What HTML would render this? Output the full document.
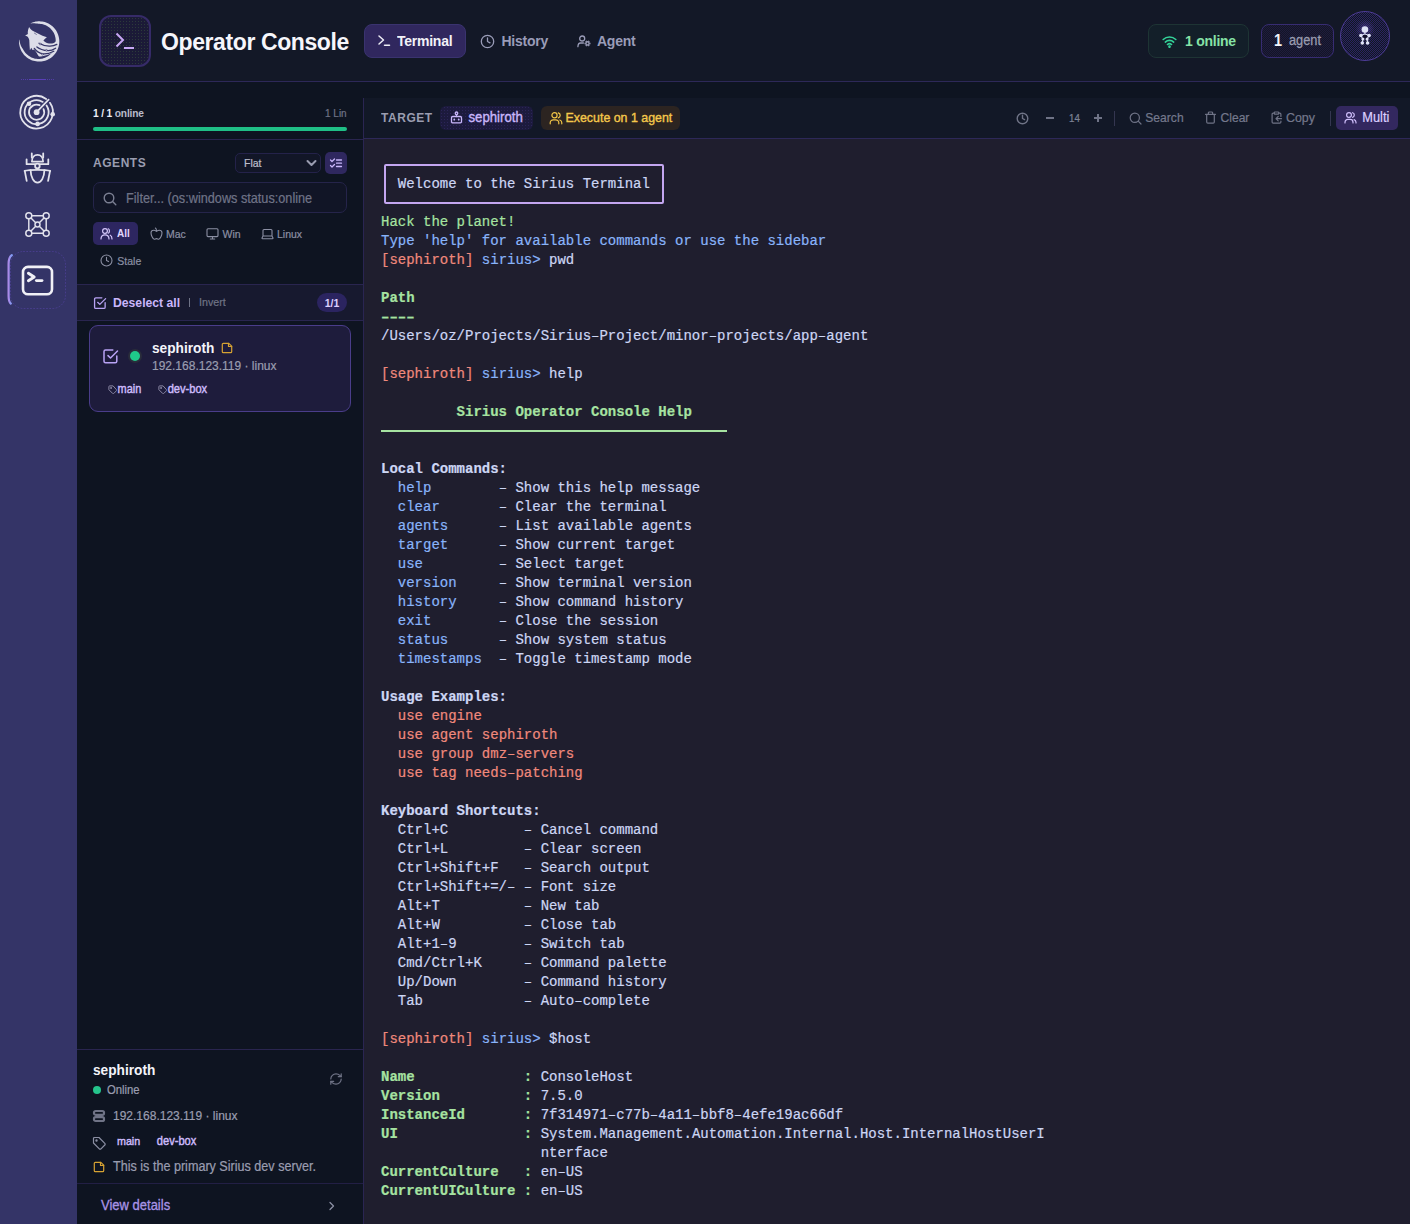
<!DOCTYPE html>
<html><head><meta charset="utf-8">
<style>
*{box-sizing:border-box;margin:0;padding:0}
html,body{width:1410px;height:1224px;overflow:hidden;background:#0e1421;font-family:"Liberation Sans",sans-serif}
.a{position:absolute}
.t{position:absolute;white-space:nowrap;line-height:1;transform:scaleY(1.1);transform-origin:0 85%}
svg{position:absolute;display:block;fill:none;stroke:currentColor;stroke-linecap:round;stroke-linejoin:round}
#rail{left:0;top:0;width:77px;height:1224px;background:#343467}
#hdr{left:77px;top:0;width:1333px;height:81px;background:#131827}
.hline{height:1px;background:#2d2858}
#term{left:364px;top:139px;width:1046px;height:1085px;background:#1f1e2e}
pre{-webkit-text-stroke:0.2px currentColor;position:absolute;left:381px;top:156px;font-family:"Liberation Mono",monospace;font-size:14px;line-height:19px;color:#cdd6f4;white-space:pre}
.g{color:#a6e3a1}.gb{color:#a6e3a1;font-weight:bold}.b{color:#89b4fa}.r{color:#f0897c}.w{color:#cdd6f4}.wb{color:#cdd6f4;font-weight:bold}
</style></head><body>
<!-- RAIL -->
<div id="rail" class="a"></div>
<!-- HEADER -->
<div id="hdr" class="a"></div>
<div class="a hline" style="left:77px;top:81px;width:1333px"></div>
<!-- RAIL ICONS -->
<svg class="a" style="left:17px;top:19px;width:45px;height:45px;fill:#dcdde8;stroke:none" viewBox="0 0 45 45">
<path d="M13.63 4.19 L14.85 3.67 L16.09 3.23 L17.36 2.88 L18.65 2.61 L19.96 2.42 L21.27 2.32 L22.59 2.30 L23.91 2.38 L25.22 2.53 L26.51 2.78 L27.79 3.10 L29.04 3.52 L30.27 4.01 L31.45 4.58 L32.60 5.22 L33.71 5.94 L34.76 6.74 L35.76 7.59 L36.71 8.52 L37.59 9.50 L38.40 10.54 L39.14 11.62 L39.82 12.76 L40.41 13.93 L40.93 15.15 L41.37 16.39 L41.72 17.66 L41.99 18.95 L42.18 20.26 L42.28 21.57 L42.30 22.89 L42.22 24.21 L42.07 25.52 L41.82 26.81 L41.50 28.09 L41.08 29.34 L40.59 30.57 L40.02 31.75 L39.38 32.90 L38.66 34.01 L37.86 35.06 L37.01 36.06 L36.08 37.01 L35.10 37.89 L34.06 38.70 L32.98 39.44 L31.84 40.12 L30.67 40.71 L29.45 41.23 L28.21 41.67 L26.94 42.02 L25.65 42.29 L24.34 42.48 L23.03 42.58 L21.71 42.60 L20.39 42.52 L19.08 42.37 L17.79 42.12 L16.51 41.80 L15.26 41.38 L14.03 40.89 L12.85 40.32 L11.70 39.68 L10.59 38.96 L9.54 38.16 L8.54 37.31 L7.59 36.38 L6.71 35.40 L5.90 34.36 L5.16 33.28 L4.48 32.14 L3.89 30.97 L3.37 29.75 L2.93 28.51 L2.58 27.24 L2.31 25.95 L2.12 24.64 L2.02 23.33 L2.00 22.01 L2.08 20.69 L2.38 20.72 L2.54 22.02 L2.79 23.30 L3.13 24.53 L3.54 25.73 L4.02 26.89 L4.58 27.99 L5.20 29.04 L5.88 30.04 L6.43 31.07 L7.05 32.07 L7.73 33.02 L8.47 33.93 L9.27 34.78 L10.12 35.58 L11.01 36.32 L11.96 37.00 L12.94 37.62 L13.97 38.17 L15.02 38.65 L16.10 39.06 L17.21 39.40 L18.33 39.66 L19.47 39.85 L20.62 39.97 L21.77 40.01 L22.91 39.97 L24.05 39.84 L25.18 39.63 L26.29 39.36 L27.37 39.01 L28.43 38.60 L29.45 38.11 L30.44 37.57 L31.39 36.96 L32.30 36.29 L33.15 35.56 L33.96 34.78 L34.71 33.96 L35.40 33.09 L36.03 32.17 L36.61 31.22 L37.11 30.24 L37.55 29.23 L37.92 28.19 L38.22 27.13 L38.45 26.06 L38.61 24.98 L38.70 23.90 L38.72 22.81 L38.70 21.73 L38.67 20.64 L38.56 19.56 L38.38 18.48 L38.13 17.41 L37.81 16.36 L37.42 15.33 L36.96 14.32 L36.44 13.35 L35.85 12.41 L35.20 11.50 L34.49 10.64 L33.72 9.82 L32.90 9.06 L32.03 8.35 L31.11 7.69 L30.14 7.10 L29.14 6.56 L28.10 6.10 L27.03 5.70 L25.94 5.37 L24.82 5.11 L23.68 4.93 L22.53 4.82 L21.37 4.68 L20.19 4.55 L18.96 4.38 L17.70 4.26 L16.41 4.23 L15.09 4.30 L13.76 4.46Z"/>
<path d="M12.1 7.9 C13.3 9.6 14.2 10.8 15.6 11.8 C17.5 12.9 19.5 13.6 21.5 14.8 C24 16.2 26.8 17.3 29.9 18.3 C28.6 19.3 27.4 20.2 26.4 21.4 C29 24.2 33 25 36.2 24.3 C37.8 23.8 39 22.6 39.8 20.8 C40.6 25.5 39.5 29.5 37 32.2 C33.5 35.6 27.5 37 22 37.6 C20.6 35.5 19.6 33.8 18.8 32.4 L17.2 30.4 L15.5 31 L14.3 28.8 L12.9 31.2 C12.6 28 12.4 24.5 12.3 21.2 C11.9 19.6 11.2 18.3 10.4 17.6 L8.1 16.4 C9.2 16 10.1 15.6 10.9 15 C10.5 13.5 11 11.3 11.3 10.2 Z"/>
<g fill="none" stroke="#343467" stroke-linecap="round">
<path d="M22 24.3 C25 26 29 27.4 33 27.2 C35.5 27 37.8 26.4 39.8 25.4" stroke-width="1.3"/>
<path d="M19.9 27.9 C22.5 30 26 31.2 31.2 31.6 C34 31.6 36.5 30.6 38.6 29.2" stroke-width="1.3"/>
<path d="M17.3 29.4 C19 32 22 34.1 26 34.8 C30 35.2 33.5 34 36.8 32.2" stroke-width="1.3"/>
<path d="M17.4 14.1 L19.4 15.4" stroke-width="0.6"/>
</g>
<g fill="#dcdde8" stroke="#343467" stroke-width="0.5">
<circle cx="23.2" cy="25" r="0.9"/><circle cx="29.4" cy="31.3" r="0.9"/><circle cx="25.4" cy="35.3" r="0.9"/>
</g>
</svg>
<div class="a" style="left:21px;top:79px;width:34px;height:1px;background-image:linear-gradient(90deg,#5a3fb8 50%,transparent 50%);background-size:2px 1px;opacity:.8"></div>
<div class="a" style="left:29px;top:79px;width:17px;height:1px;background:#5a3fb8"></div>
<!-- radar -->
<svg class="a" style="left:16px;top:92px;width:42px;height:42px;color:#e2e2ec;stroke-width:1.8" viewBox="0 0 42 42">
<path d="M33.95 10.85 A16.3 16.3 0 1 1 30.18 7.01"/><path d="M30.55 13.49 A12 12 0 1 1 26.78 9.91"/><path d="M27.54 17.11 A7.6 7.6 0 1 1 23.57 13.20"/>
<circle cx="20.6" cy="20.2" r="2.9" fill="#e2e2ec" stroke="none"/><path d="M20.6 20.2 L32.6 7.6"/>
<circle cx="13" cy="11.7" r="2.3" fill="#e2e2ec" stroke="none"/><circle cx="36.7" cy="22.3" r="2.3" fill="#e2e2ec" stroke="none"/><circle cx="21.6" cy="31.9" r="2.3" fill="#e2e2ec" stroke="none"/>
</svg>
<!-- bug -->
<svg class="a" style="left:18px;top:148px;width:40px;height:40px;color:#e2e2ec;stroke-width:1.8" viewBox="0 0 40 40">
<path d="M13.8 5.3 V9.5 M25.2 5.3 V9.5"/>
<path d="M13.9 13.6 C13.9 9.3 16.4 6.9 19.5 6.9 C22.6 6.9 25.1 9.3 25.1 13.6 Z"/>
<circle cx="19.4" cy="18" r="2.3"/>
<path d="M17 16.2 L8.6 16.2 L8.6 11.3 M21.8 16.2 L30.3 16.2 L30.3 11.3"/>
<path d="M6.6 22.9 C9.5 22 13 21.8 19.5 21.8 C26 21.8 29.5 22 32.2 22.9"/>
<path d="M12.6 22.2 C12.8 29.5 15.8 34.6 19.5 34.6 C23.2 34.6 26.2 29.5 26.4 22.2"/>
<path d="M6.8 23.2 L8.7 32.8 M32 23.2 L30.1 32.8"/>
</svg>
<!-- network -->
<svg class="a" style="left:24px;top:211px;width:27px;height:27px;color:#e2e2ec;stroke-width:1.45" viewBox="0 0 27 27">
<circle cx="4.8" cy="4.8" r="3"/><circle cx="22.2" cy="4.8" r="3"/><circle cx="4.8" cy="22.2" r="3"/><circle cx="22.2" cy="22.2" r="3"/><circle cx="13.5" cy="13.5" r="2.5"/>
<path d="M7.8 4.8 H19.2 M7.8 22.2 H19.2 M4.8 7.8 V19.2 M22.2 7.8 V19.2 M7 7 L11.7 11.7 M20 7 L15.3 11.7 M7 20 L11.7 15.3 M20 20 L15.3 15.3"/>
</svg>
<!-- active terminal -->
<svg class="a" style="left:0;top:240px;width:77px;height:80px" viewBox="0 0 77 80">
<defs><linearGradient id="ig" x1="0" y1="0" x2="1" y2="0"><stop offset="0" stop-color="#a98ae8"/><stop offset="1" stop-color="#7f9cf5"/></linearGradient></defs>
<rect x="10.5" y="11.5" width="55" height="57" rx="13" fill="none" stroke="#5a46b0" stroke-width="1" stroke-dasharray="1 2.2" opacity="0.5"/>
<path d="M11.8 15.2 Q8.6 17.5 8.6 24 V56 Q8.6 61.5 10.8 63.6" fill="none" stroke="url(#ig)" stroke-width="2.2" stroke-linecap="round"/>
</svg>
<svg class="a" style="left:20px;top:264px;width:35px;height:33px;color:#f0f0f6;stroke-width:2.6" viewBox="0 0 35 33">
<rect x="3" y="2.9" width="29" height="27.3" rx="5"/><path d="M8.4 9.2 L14.2 13 L8.4 16.8" stroke-width="2.9"/><path d="M16.4 16.6 H22" stroke-width="2.9"/>
</svg>

<!-- HEADER -->
<div class="a" style="left:99px;top:15px;width:52px;height:52px;border:2px solid #362b68;border-radius:12px;background:#1b1a37 radial-gradient(circle,#2c3a3a 0.6px,transparent 0.9px) 0 0/3px 3px"></div>
<svg class="a" style="left:99px;top:15px;width:52px;height:52px;color:#c7a7f4;stroke-width:2;stroke-linecap:butt;stroke-linejoin:miter" viewBox="0 0 52 52">
<path d="M17.5 18.5 L24 25 L17.5 31.5"/><path d="M25 33 H35"/>
</svg>
<div class="t" style="left:161px;top:30.5px;font-size:23px;font-weight:bold;color:#f6f6fb;letter-spacing:-0.4px;transform:scaleY(1.04)">Operator Console</div>

<div class="a" style="left:364px;top:24px;width:102px;height:34px;background:#30275e;border:1px solid #3a336f;border-radius:8px"></div>
<svg class="a" style="left:377px;top:33px;width:14px;height:14px;color:#eeeef6;stroke-width:1.5" viewBox="0 0 14 14">
<path d="M2 3 L6.5 7 L2 11"/><path d="M7.5 12.2 H12.5"/>
</svg>
<div class="t" style="left:397px;top:34.2px;font-size:14px;font-weight:bold;letter-spacing:-0.25px;color:#f2f2f8">Terminal</div>

<svg class="a" style="left:480px;top:33.5px;width:15px;height:15px;color:#9a9cb8;stroke-width:1.3" viewBox="0 0 15 15">
<circle cx="7.5" cy="7.5" r="6.2"/><path d="M7.5 3.8 V7.5 L10 8.8"/>
</svg>
<div class="t" style="left:501.5px;top:34.2px;font-size:14px;font-weight:bold;letter-spacing:-0.25px;color:#9a9cb8">History</div>
<svg class="a" style="left:576px;top:33.5px;width:15px;height:15px;color:#9a9cb8;stroke-width:1.3" viewBox="0 0 15 15">
<circle cx="6.2" cy="4.5" r="2.5"/><path d="M1.9 12.7 C2 10.6 2.8 9 4.5 9 H7.4"/><circle cx="11.5" cy="9.4" r="1.6" stroke-width="1.4"/><path d="M13.40 9.40 L14.50 9.40 M12.45 11.05 L13.00 12.00 M10.55 11.05 L10.00 12.00 M9.60 9.40 L8.50 9.40 M10.55 7.75 L10.00 6.80 M12.45 7.75 L13.00 6.80" stroke-width="1.5" stroke-linecap="butt"/>
</svg>
<div class="t" style="left:597px;top:34.2px;font-size:14px;font-weight:bold;letter-spacing:-0.25px;color:#9a9cb8">Agent</div>

<div class="a" style="left:1148px;top:24px;width:101px;height:34px;background:#131f29;border:1px solid #1e3434;border-radius:8px"></div>
<svg class="a" style="left:1161.5px;top:34.5px;width:15px;height:13px;color:#34d399;stroke-width:1.7" viewBox="0 0 16 14">
<path d="M1.2 4.8 A10 10 0 0 1 14.8 4.8"/><path d="M3.5 7.6 A6.6 6.6 0 0 1 12.5 7.6"/><path d="M5.8 10.2 A3.3 3.3 0 0 1 10.2 10.2"/><circle cx="8" cy="12.6" r="0.6" fill="#34d399"/>
</svg>
<div class="t" style="left:1185px;top:34.2px;font-size:14px;font-weight:bold;letter-spacing:-0.25px;color:#86e3a6">1 online</div>

<div class="a" style="left:1261px;top:24px;width:73px;height:34px;background:#181631 repeating-conic-gradient(#1f1c3c 0 25%,#131527 0 50%) 0 0/2px 2px;border:1px solid #372c72;border-radius:8px"></div>
<div class="t" style="left:1274px;top:34px;font-size:14.5px;font-weight:bold;color:#f4f4fa">1</div>
<div class="t" style="left:1289px;top:35.2px;font-size:12.8px;color:#9a9cb0;-webkit-text-stroke:0.25px currentColor">agent</div>

<div class="a" style="left:1340px;top:11px;width:50px;height:50px;border:1px solid #4d3c96;border-radius:50%;background:repeating-conic-gradient(#2b2262 0 25%,#101820 0 50%) 0 0/2px 2px"></div>
<div class="a" style="left:1355px;top:19px;width:20px;height:20px;border-radius:50%;background:radial-gradient(circle,rgba(110,80,200,.45),transparent 70%)"></div>
<svg class="a" style="left:1338px;top:9px;width:54px;height:54px;color:#dfe2f6;stroke-width:1.1" viewBox="0 0 54 54">
<path d="M26.9 23 V25 M22.9 26.5 L26.9 25 L31.1 26.5 M22.9 26.5 L24.9 30 L24.3 34 M31.1 26.5 L29.1 30 L29.6 34"/>
<ellipse cx="26.9" cy="27.6" rx="2.6" ry="1.8" fill="#120f2a" stroke="none"/>
<circle cx="26.9" cy="20.5" r="3.3" fill="#dfe2f6" stroke="none"/>
<circle cx="22.9" cy="26.5" r="1.8" fill="#dfe2f6" stroke="none"/><circle cx="31.1" cy="26.5" r="1.8" fill="#dfe2f6" stroke="none"/>
<circle cx="24.9" cy="30" r="1.5" fill="#dfe2f6" stroke="none"/><circle cx="29.1" cy="30" r="1.5" fill="#dfe2f6" stroke="none"/>
<circle cx="24.3" cy="34" r="1.8" fill="#dfe2f6" stroke="none"/><circle cx="29.6" cy="34" r="1.8" fill="#dfe2f6" stroke="none"/>
</svg>

<!-- LEFT PANEL -->
<div class="a" style="left:363px;top:98px;width:1px;height:1126px;background:#2a2552"></div>
<!-- TOOLBAR -->
<div class="a" style="left:364px;top:98px;width:1046px;height:40px;background:#121827"></div>
<div class="a hline" style="left:364px;top:138px;width:1046px"></div>
<div class="t" style="left:93px;top:109px;font-size:10.2px;font-weight:bold;color:#eceef6;letter-spacing:-0.15px">1 / 1 <span style="color:#b9bccb">online</span></div>
<div class="t" style="left:325px;top:108.8px;font-size:10px;color:#6f7386;-webkit-text-stroke:0.2px currentColor">1 Lin</div>
<div class="a" style="left:93px;top:127px;width:254px;height:4px;border-radius:2px;background:#1fbf86"></div>
<div class="a hline" style="left:77px;top:139px;width:286px;background:#29254f"></div>

<div class="t" style="left:93px;top:157px;font-size:12px;font-weight:bold;color:#9a9db0;letter-spacing:0.55px">AGENTS</div>
<div class="a" style="left:235px;top:153px;width:86px;height:20px;background:#121627;border:1px solid #24224a;border-radius:5px"></div>
<div class="t" style="left:244px;top:157.6px;font-size:10.5px;color:#bcbecc;-webkit-text-stroke:0.2px currentColor">Flat</div>
<svg class="a" style="left:306px;top:158px;width:11px;height:10px;color:#9a9cb0;stroke-width:2" viewBox="0 0 11 10"><path d="M1.5 3 L5.5 7 L9.5 3"/></svg>
<div class="a" style="left:325px;top:152px;width:22px;height:22px;background:#2f285f;border-radius:5px"></div>
<svg class="a" style="left:329px;top:156px;width:14px;height:14px;color:#c9b6fb;stroke-width:1.3" viewBox="0 0 14 14"><path d="M1.5 4 L3 5.5 L5.5 3 M1.5 9.5 L3 11 L5.5 8.5 M7.5 4 H12.5 M7.5 7.2 H12.5 M7.5 10.5 H12.5"/></svg>

<div class="a" style="left:93px;top:182px;width:254px;height:31px;background:#111526;border:1px solid #25244a;border-radius:7px"></div>
<svg class="a" style="left:103px;top:192px;width:14px;height:14px;color:#7b7f92;stroke-width:1.4" viewBox="0 0 14 14"><circle cx="6" cy="6" r="4.8"/><path d="M9.6 9.6 L12.8 12.8"/></svg>
<div class="t" style="left:126px;top:192.5px;font-size:12.7px;color:#6f7386;-webkit-text-stroke:0.2px currentColor">Filter... (os:windows status:online</div>

<div class="a" style="left:93px;top:222px;width:45px;height:23px;background:#2d2660;border-radius:5px"></div>
<svg class="a" style="left:100px;top:227px;width:13px;height:13px;color:#d6c8fb;stroke-width:1.2" viewBox="0 0 13 13"><circle cx="5" cy="4" r="2.4"/><path d="M1 12 C1 9 2.6 7.8 5 7.8 C7.4 7.8 9 9 9 12"/><path d="M8.3 1.8 C9.8 2.3 9.8 5.7 8.3 6.2 M10.2 8.2 C11.6 8.8 12 10 12 12"/></svg>
<div class="t" style="left:117px;top:229px;font-size:10px;font-weight:bold;color:#e3d8ff">All</div>
<svg class="a" style="left:149.5px;top:227px;width:13px;height:13px;color:#8b8fa3;stroke-width:1.1" viewBox="0 0 13 13"><path d="M6.5 11.6 C7.3 11.6 8 12.2 8.7 12.2 C10.3 12.2 12 8 12 5.8 A2.7 2.7 0 0 0 9.3 3.2 C8.1 3.2 7 3.9 6.5 4.2 C6 3.9 4.9 3.2 3.7 3.2 A2.7 2.7 0 0 0 1 5.8 C1 8 2.7 12.2 4.3 12.2 C5 12.2 5.7 11.6 6.5 11.6Z"/><path d="M5.4 1 C6 1.3 6.5 2.2 6.5 3.9"/></svg>
<div class="t" style="left:166px;top:228.8px;font-size:10.5px;color:#8b8fa3;-webkit-text-stroke:0.2px currentColor">Mac</div>
<svg class="a" style="left:205.5px;top:227px;width:13px;height:13px;color:#8b8fa3;stroke-width:1.1" viewBox="0 0 13 13"><rect x="1" y="1.8" width="11" height="7.8" rx="1"/><path d="M4.3 12 H8.7 M6.5 9.6 V12"/></svg>
<div class="t" style="left:222.5px;top:228.8px;font-size:10.5px;color:#8b8fa3;-webkit-text-stroke:0.2px currentColor">Win</div>
<svg class="a" style="left:261px;top:227px;width:13px;height:13px;color:#8b8fa3;stroke-width:1.1" viewBox="0 0 13 13"><path d="M2 9 V3.5 A1 1 0 0 1 3 2.5 H10 A1 1 0 0 1 11 3.5 V9 M11 9 H2 M11 9 L12 11 A.6 .6 0 0 1 11.5 11.8 H1.5 A.6 .6 0 0 1 1 11 L2 9"/></svg>
<div class="t" style="left:277px;top:228.8px;font-size:10.5px;color:#8b8fa3;-webkit-text-stroke:0.2px currentColor">Linux</div>
<svg class="a" style="left:100px;top:254px;width:13px;height:13px;color:#8b8fa3;stroke-width:1.1" viewBox="0 0 13 13"><circle cx="6.5" cy="6.5" r="5.5"/><path d="M6.5 3.3 V6.5 L8.6 7.6"/></svg>
<div class="t" style="left:117.3px;top:255.8px;font-size:10.5px;color:#8b8fa3;-webkit-text-stroke:0.2px currentColor">Stale</div>

<div class="a hline" style="left:77px;top:284px;width:286px;background:#29254f"></div>
<div class="a" style="left:77px;top:285px;width:286px;height:35px;background:#17192f"></div>
<div class="a hline" style="left:77px;top:320px;width:286px;background:#29254f"></div>
<svg class="a" style="left:92.5px;top:295.5px;width:14px;height:14px;color:#b9a3f5;stroke-width:1.4" viewBox="0 0 15 15"><path d="M13 7 V12 A1.3 1.3 0 0 1 11.7 13.3 H3 A1.3 1.3 0 0 1 1.7 12 V3.3 A1.3 1.3 0 0 1 3 2 H9.5"/><path d="M5 6.8 L7.3 9 L13.5 2.8"/></svg>
<div class="t" style="left:113px;top:297px;font-size:12.2px;font-weight:bold;color:#c9b6fb">Deselect all</div>
<div class="a" style="left:189px;top:298px;width:1px;height:9px;background:#6f7386"></div>
<div class="t" style="left:199px;top:297.3px;font-size:10.7px;color:#6f7386;-webkit-text-stroke:0.2px currentColor">Invert</div>
<div class="a" style="left:317px;top:293px;width:30px;height:19px;border-radius:10px;background:#2b2460"></div>
<div class="t" style="left:317px;top:298px;width:30px;text-align:center;font-size:10.5px;font-weight:bold;color:#dccfff">1/1</div>

<div class="a" style="left:89px;top:325px;width:262px;height:87px;background:#1e1c3c;border:1px solid #4a3d8a;border-radius:9px"></div>
<svg class="a" style="left:102px;top:347.5px;width:17px;height:17px;color:#b9a3f5;stroke-width:1.5" viewBox="0 0 17 17"><path d="M14.8 8 V13.3 A1.5 1.5 0 0 1 13.3 14.8 H3.5 A1.5 1.5 0 0 1 2 13.3 V3.5 A1.5 1.5 0 0 1 3.5 2 H10.8"/><path d="M6 7.6 L8.5 10 L15.5 3"/></svg>
<div class="a" style="left:128px;top:349px;width:14px;height:14px;border-radius:50%;background:#292c3b"></div>
<div class="a" style="left:130px;top:351px;width:10px;height:10px;border-radius:50%;background:#1fc98a"></div>
<div class="t" style="left:152px;top:341.5px;font-size:13.7px;font-weight:bold;color:#f4f4fa">sephiroth</div>
<svg class="a" style="left:221px;top:342px;width:12px;height:12px;color:#d6a233;stroke-width:1.2" viewBox="0 0 12 12"><path d="M7.8 1.3 H2.3 A1 1 0 0 0 1.3 2.3 V9.7 A1 1 0 0 0 2.3 10.7 H9.7 A1 1 0 0 0 10.7 9.7 V4.2 Z"/><path d="M7.5 1.3 V4.5 H10.7"/></svg>
<div class="t" style="left:152px;top:359.5px;font-size:12px;color:#9a9db0;-webkit-text-stroke:0.2px currentColor">192.168.123.119 · linux</div>
<svg class="a" style="left:107.5px;top:385px;width:9px;height:9px;color:#8d8aa6;stroke-width:1.1" viewBox="0 0 10 10"><path d="M5.2 1 H1.8 A.8 .8 0 0 0 1 1.8 V5.2 L5.2 9.4 A.9 .9 0 0 0 6.4 9.4 L9.4 6.4 A.9 .9 0 0 0 9.4 5.2 Z"/><circle cx="3.3" cy="3.3" r=".5" fill="#8d8aa6"/></svg>
<div class="t" style="left:117.6px;top:383.8px;font-size:10.9px;color:#cdbbfb;-webkit-text-stroke:0.4px currentColor">main</div>
<svg class="a" style="left:157.5px;top:385px;width:9px;height:9px;color:#8d8aa6;stroke-width:1.1" viewBox="0 0 10 10"><path d="M5.2 1 H1.8 A.8 .8 0 0 0 1 1.8 V5.2 L5.2 9.4 A.9 .9 0 0 0 6.4 9.4 L9.4 6.4 A.9 .9 0 0 0 9.4 5.2 Z"/><circle cx="3.3" cy="3.3" r=".5" fill="#8d8aa6"/></svg>
<div class="t" style="left:167.7px;top:383.8px;font-size:11.1px;color:#cdbbfb;-webkit-text-stroke:0.4px currentColor">dev-box</div>

<!-- details -->
<div class="a hline" style="left:77px;top:1049px;width:286px;background:#29254f"></div>
<div class="t" style="left:93px;top:1064.2px;font-size:13.7px;font-weight:bold;color:#f4f4fa">sephiroth</div>
<div class="a" style="left:93px;top:1086px;width:8px;height:8px;border-radius:50%;background:#25c48c"></div>
<div class="t" style="left:107px;top:1084.5px;font-size:11.3px;color:#9a9db0;-webkit-text-stroke:0.2px currentColor">Online</div>
<svg class="a" style="left:329px;top:1072px;width:14px;height:14px;color:#6f7386;stroke-width:1.2" viewBox="0 0 14 14"><path d="M1.8 7 A5.2 5.2 0 0 1 7 1.8 A5.7 5.7 0 0 1 10.9 3.4 L12.2 4.7"/><path d="M12.2 1.8 V4.7 H9.3"/><path d="M12.2 7 A5.2 5.2 0 0 1 7 12.2 A5.7 5.7 0 0 1 3.1 10.6 L1.8 9.3"/><path d="M4.7 9.3 H1.8 V12.2"/></svg>
<svg class="a" style="left:92px;top:1109px;width:14px;height:14px;color:#6f7386;stroke-width:2.2" viewBox="0 0 14 14"><rect x="2" y="2" width="10" height="3.8" rx="1.6"/><rect x="2" y="8.2" width="10" height="3.8" rx="1.6"/></svg>
<div class="t" style="left:113px;top:1109.5px;font-size:12px;color:#9a9db0;-webkit-text-stroke:0.2px currentColor">192.168.123.119 · linux</div>
<svg class="a" style="left:92px;top:1136px;width:14px;height:14px;color:#8b8fa3;stroke-width:1.2" viewBox="0 0 14 14"><path d="M7 1.5 H2.5 A1 1 0 0 0 1.5 2.5 V7 L7.3 12.8 A1.2 1.2 0 0 0 9 12.8 L12.8 9 A1.2 1.2 0 0 0 12.8 7.3 Z"/><circle cx="4.5" cy="4.5" r=".6" fill="#8b8fa3"/></svg>
<div class="t" style="left:117px;top:1136.4px;font-size:10.7px;color:#cdbbfb;-webkit-text-stroke:0.4px currentColor">main</div>
<div class="t" style="left:156.8px;top:1136.4px;font-size:11.1px;color:#cdbbfb;-webkit-text-stroke:0.4px currentColor">dev-box</div>
<svg class="a" style="left:93px;top:1161px;width:12px;height:12px;color:#d6a233;stroke-width:1.2" viewBox="0 0 12 12"><path d="M7.8 1.3 H2.3 A1 1 0 0 0 1.3 2.3 V9.7 A1 1 0 0 0 2.3 10.7 H9.7 A1 1 0 0 0 10.7 9.7 V4.2 Z"/><path d="M7.5 1.3 V4.5 H10.7"/></svg>
<div class="t" style="left:113px;top:1160.5px;font-size:12.6px;color:#9a9db0;-webkit-text-stroke:0.2px currentColor">This is the primary Sirius dev server.</div>
<div class="a hline" style="left:77px;top:1183px;width:286px;background:#221f45"></div>
<div class="t" style="left:101px;top:1198.5px;font-size:13px;color:#a893e6;-webkit-text-stroke:0.3px currentColor">View details</div>
<svg class="a" style="left:326px;top:1200px;width:12px;height:12px;color:#8b8fa3;stroke-width:1.3" viewBox="0 0 12 12"><path d="M4 2.5 L7.5 6 L4 9.5"/></svg>

<div class="t" style="left:381px;top:111.8px;font-size:12px;font-weight:bold;color:#9a9db0;letter-spacing:0.55px">TARGET</div>
<div class="a" style="left:440px;top:106px;width:93px;height:24px;background:#1c1a3d radial-gradient(circle,#2b2558 0.5px,transparent 0.8px) 0 0/3px 3px;border-radius:6px"></div>
<svg class="a" style="left:449.5px;top:111px;width:13px;height:13px;color:#c9b6fb;stroke-width:1.3" viewBox="0 0 13 13"><circle cx="6.5" cy="2.3" r="1.3"/><path d="M6.5 3.6 V5.5"/><rect x="1.5" y="5.5" width="10" height="6.3" rx="1.2"/><path d="M4.3 8.5 V8.7 M8.7 8.5 V8.7" stroke-width="1.8"/></svg>
<div class="t" style="left:468.5px;top:111.3px;font-size:13.2px;color:#c9b6fb;-webkit-text-stroke:0.35px currentColor">sephiroth</div>
<div class="a" style="left:541px;top:106px;width:139px;height:24px;background:#2c2421;border-radius:6px"></div>
<svg class="a" style="left:548.5px;top:111px;width:14px;height:14px;color:#f2c547;stroke-width:1.2" viewBox="0 0 14 14"><circle cx="5.5" cy="4.3" r="2.6"/><path d="M1.2 12.8 V11.8 A3 3 0 0 1 4.2 8.8 H6.8 A3 3 0 0 1 9.8 11.8 V12.8"/><path d="M9.3 1.8 A2.6 2.6 0 0 1 9.3 6.8 M12.8 12.8 V11.8 A3 3 0 0 0 10.8 9"/></svg>
<div class="t" style="left:565.5px;top:112px;font-size:12.4px;color:#f5c84b;-webkit-text-stroke:0.35px currentColor">Execute on 1 agent</div>

<svg class="a" style="left:1015.5px;top:111.5px;width:13px;height:13px;color:#6f7386;stroke-width:1.4" viewBox="0 0 13 13"><circle cx="6.5" cy="6.5" r="5.3"/><path d="M6.5 3.3 V6.5 L8.6 7.6"/></svg>
<div class="a" style="left:1046px;top:117.2px;width:8px;height:1.5px;background:#6f7386"></div>
<div class="t" style="left:1069px;top:113.8px;font-size:9.8px;color:#7f8396;-webkit-text-stroke:0.2px currentColor">14</div>
<div class="a" style="left:1094px;top:117.2px;width:8px;height:1.5px;background:#6f7386"></div>
<div class="a" style="left:1097.3px;top:114px;width:1.5px;height:8px;background:#6f7386"></div>
<div class="a" style="left:1114px;top:111px;width:1px;height:14.5px;background:#343650"></div>
<svg class="a" style="left:1129px;top:111.5px;width:13px;height:13px;color:#6f7386;stroke-width:1.2" viewBox="0 0 13 13"><circle cx="5.8" cy="5.8" r="4.6"/><path d="M9.2 9.2 L12 12"/></svg>
<div class="t" style="left:1145.3px;top:112.3px;font-size:12.1px;color:#74788c;-webkit-text-stroke:0.2px currentColor">Search</div>
<svg class="a" style="left:1203.5px;top:111px;width:13px;height:13px;color:#6f7386;stroke-width:1.2" viewBox="0 0 13 13"><path d="M1.5 3.3 H11.5 M10.3 3.3 V11 A1.2 1.2 0 0 1 9.1 12.2 H3.9 A1.2 1.2 0 0 1 2.7 11 V3.3 M4.4 3.3 V2 A1 1 0 0 1 5.4 1 H7.6 A1 1 0 0 1 8.6 2 V3.3"/></svg>
<div class="t" style="left:1220.5px;top:112.3px;font-size:12.1px;color:#74788c;-webkit-text-stroke:0.2px currentColor">Clear</div>
<svg class="a" style="left:1270px;top:111px;width:13px;height:13px;color:#6f7386;stroke-width:1.2" viewBox="0 0 13 13"><rect x="4.3" y="1" width="4.4" height="2.2" rx=".6"/><path d="M4.3 2.1 H3.2 A1.1 1.1 0 0 0 2.1 3.2 V11 A1.1 1.1 0 0 0 3.2 12.1 H9.8 A1.1 1.1 0 0 0 10.9 11 V10 M8.7 2.1 H9.8 A1.1 1.1 0 0 1 10.9 3.2 V5.4 M11.5 7.7 H6 M8.2 5.5 L6 7.7 L8.2 9.9"/></svg>
<div class="t" style="left:1286px;top:112.3px;font-size:12.4px;color:#74788c;-webkit-text-stroke:0.2px currentColor">Copy</div>
<div class="a" style="left:1330px;top:111px;width:1px;height:14.5px;background:#343650"></div>
<div class="a" style="left:1336px;top:106px;width:62px;height:24px;background:#33285f;border-radius:5px"></div>
<svg class="a" style="left:1344px;top:111px;width:13px;height:13px;color:#d0bffc;stroke-width:1.2" viewBox="0 0 13 13"><circle cx="5" cy="4" r="2.4"/><path d="M1 12 V11.2 A2.8 2.8 0 0 1 3.8 8.4 H6.2 A2.8 2.8 0 0 1 9 11.2 V12"/><path d="M8.6 1.7 A2.4 2.4 0 0 1 8.6 6.3 M12 12 V11.2 A2.8 2.8 0 0 0 10.1 8.6"/></svg>
<div class="t" style="left:1362.3px;top:111.8px;font-size:12.8px;color:#dccfff;-webkit-text-stroke:0.2px currentColor">Multi</div>

<!-- TERMINAL -->
<div id="term" class="a"></div>
<div class="a" style="left:384px;top:164px;width:280px;height:40px;border:2px solid #c3a6f0;border-radius:2px"></div>
<div class="a" style="left:381px;top:430px;width:346px;height:2px;background:#a6e3a1"></div>
<pre>

  <span class="w">Welcome to the Sirius Terminal</span>

<span class="g">Hack the planet!</span>
<span class="b">Type 'help' for available commands or use the sidebar</span>
<span class="r">[sephiroth]</span> <span class="b">sirius&gt;</span> pwd

<span class="gb">Path</span>
<span class="gb">––––</span>
/Users/oz/Projects/Sirius–Project/minor–projects/app–agent

<span class="r">[sephiroth]</span> <span class="b">sirius&gt;</span> help

<span class="gb">         Sirius Operator Console Help</span>


<span class="wb">Local Commands:</span>
  <span class="b">help</span>        – Show this help message
  <span class="b">clear</span>       – Clear the terminal
  <span class="b">agents</span>      – List available agents
  <span class="b">target</span>      – Show current target
  <span class="b">use</span>         – Select target
  <span class="b">version</span>     – Show terminal version
  <span class="b">history</span>     – Show command history
  <span class="b">exit</span>        – Close the session
  <span class="b">status</span>      – Show system status
  <span class="b">timestamps</span>  – Toggle timestamp mode

<span class="wb">Usage Examples:</span>
  <span class="r">use engine</span>
  <span class="r">use agent sephiroth</span>
  <span class="r">use group dmz–servers</span>
  <span class="r">use tag needs–patching</span>

<span class="wb">Keyboard Shortcuts:</span>
  Ctrl+C         – Cancel command
  Ctrl+L         – Clear screen
  Ctrl+Shift+F   – Search output
  Ctrl+Shift+=/– – Font size
  Alt+T          – New tab
  Alt+W          – Close tab
  Alt+1–9        – Switch tab
  Cmd/Ctrl+K     – Command palette
  Up/Down        – Command history
  Tab            – Auto–complete

<span class="r">[sephiroth]</span> <span class="b">sirius&gt;</span> $host

<span class="gb">Name</span>             <span class="gb">:</span> ConsoleHost
<span class="gb">Version</span>          <span class="gb">:</span> 7.5.0
<span class="gb">InstanceId</span>       <span class="gb">:</span> 7f314971–c77b–4a11–bbf8–4efe19ac66df
<span class="gb">UI</span>               <span class="gb">:</span> System.Management.Automation.Internal.Host.InternalHostUserI
                   nterface
<span class="gb">CurrentCulture</span>   <span class="gb">:</span> en–US
<span class="gb">CurrentUICulture</span> <span class="gb">:</span> en–US</pre>
</body></html>
